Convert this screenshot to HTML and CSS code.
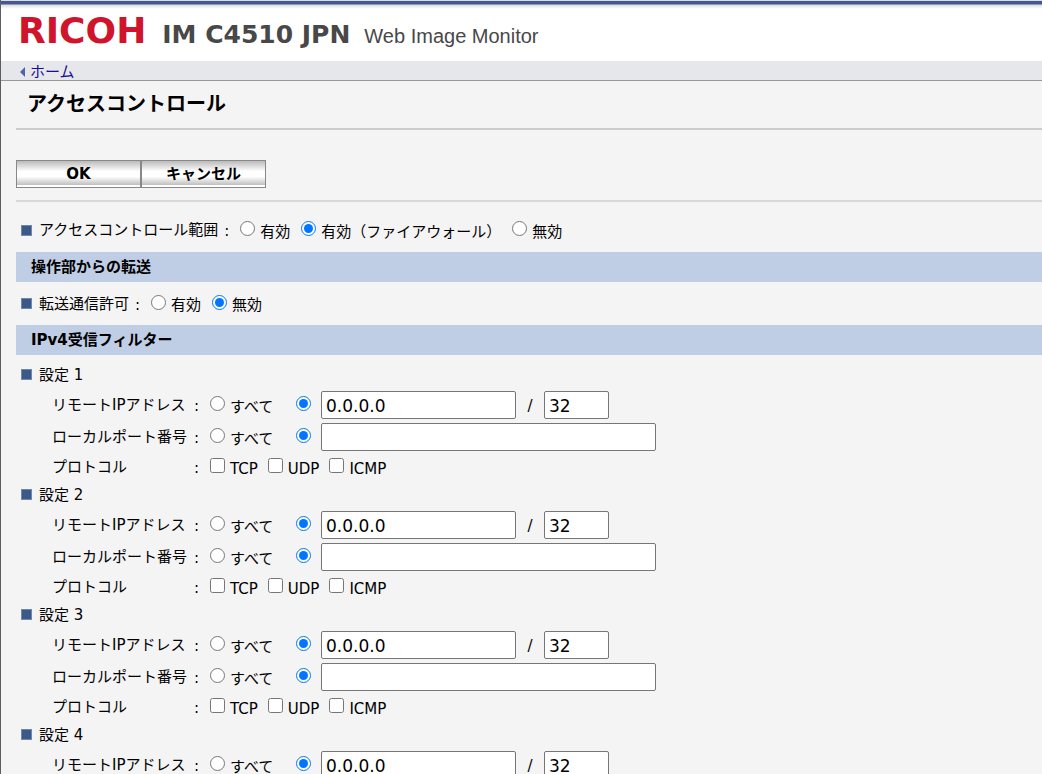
FILE: index.html
```
<!DOCTYPE html>
<html lang="ja">
<head>
<meta charset="utf-8">
<title>Web Image Monitor</title>
<link rel="stylesheet" href="styles.css">
</head>
<body>
<div class="page">
  <header class="header">
    <span class="logo">RICOH</span>
    <span class="model">IM C4510 JPN</span>
    <span class="product">Web Image Monitor</span>
  </header>
  <nav class="breadcrumb">
    <svg class="back-icon" width="5" height="10" viewBox="0 0 5 10" aria-hidden="true"><path d="M5 0v10L0 5z" fill="#5560a8"/></svg>
    <a href="#">ホーム</a>
  </nav>
  <main class="content">
    <h1 class="title">アクセスコントロール</h1>
    <form>
      <div class="actions">
        <button type="button" class="button">OK</button>
        <button type="button" class="button">キャンセル</button>
      </div>

      <div class="row range-row" role="radiogroup" aria-labelledby="range">
        <span class="marker"></span><span id="range">アクセスコントロール範囲</span><span class="colon">:</span>
        <div class="options">
          <label class="option"><input type="radio" name="range"><span>有効</span></label>
          <label class="option"><input type="radio" name="range" checked><span>有効（ファイアウォール）</span></label>
          <label class="option"><input type="radio" name="range"><span>無効</span></label>
        </div>
      </div>

      <h2 class="band">操作部からの転送</h2>
      <div class="row forward-row" role="radiogroup" aria-labelledby="forward">
        <span class="marker"></span><span id="forward">転送通信許可</span><span class="colon">:</span>
        <div class="options">
          <label class="option"><input type="radio" name="forward"><span>有効</span></label>
          <label class="option"><input type="radio" name="forward" checked><span>無効</span></label>
        </div>
      </div>

      <h2 class="band">IPv4受信フィルター</h2>
      <div class="filters">
        <section class="filter">
          <h3 class="filter-name"><span class="marker"></span>設定 1</h3>
          <div class="field"><label class="name" for="ip1">リモートIPアドレス</label><span class="colon">:</span><label class="option all"><input type="radio" name="remote1"><span>すべて</span></label><input type="radio" name="remote1" aria-label="IPアドレスを指定" checked><input class="text address" id="ip1" type="text" value="0.0.0.0"><span class="slash">/</span><input class="text prefix" type="text" value="32" aria-label="プレフィックス長"></div>
          <div class="field"><label class="name" for="port1">ローカルポート番号</label><span class="colon">:</span><label class="option all"><input type="radio" name="local1"><span>すべて</span></label><input type="radio" name="local1" aria-label="ポート番号を指定" checked><input class="text port" id="port1" type="text"></div>
          <div class="field protocol"><span class="name">プロトコル</span><span class="colon">:</span><div class="options"><label class="option"><input type="checkbox"><span>TCP</span></label><label class="option"><input type="checkbox"><span>UDP</span></label><label class="option"><input type="checkbox"><span>ICMP</span></label></div></div>
        </section>
        <section class="filter">
          <h3 class="filter-name"><span class="marker"></span>設定 2</h3>
          <div class="field"><label class="name" for="ip2">リモートIPアドレス</label><span class="colon">:</span><label class="option all"><input type="radio" name="remote2"><span>すべて</span></label><input type="radio" name="remote2" aria-label="IPアドレスを指定" checked><input class="text address" id="ip2" type="text" value="0.0.0.0"><span class="slash">/</span><input class="text prefix" type="text" value="32" aria-label="プレフィックス長"></div>
          <div class="field"><label class="name" for="port2">ローカルポート番号</label><span class="colon">:</span><label class="option all"><input type="radio" name="local2"><span>すべて</span></label><input type="radio" name="local2" aria-label="ポート番号を指定" checked><input class="text port" id="port2" type="text"></div>
          <div class="field protocol"><span class="name">プロトコル</span><span class="colon">:</span><div class="options"><label class="option"><input type="checkbox"><span>TCP</span></label><label class="option"><input type="checkbox"><span>UDP</span></label><label class="option"><input type="checkbox"><span>ICMP</span></label></div></div>
        </section>
        <section class="filter">
          <h3 class="filter-name"><span class="marker"></span>設定 3</h3>
          <div class="field"><label class="name" for="ip3">リモートIPアドレス</label><span class="colon">:</span><label class="option all"><input type="radio" name="remote3"><span>すべて</span></label><input type="radio" name="remote3" aria-label="IPアドレスを指定" checked><input class="text address" id="ip3" type="text" value="0.0.0.0"><span class="slash">/</span><input class="text prefix" type="text" value="32" aria-label="プレフィックス長"></div>
          <div class="field"><label class="name" for="port3">ローカルポート番号</label><span class="colon">:</span><label class="option all"><input type="radio" name="local3"><span>すべて</span></label><input type="radio" name="local3" aria-label="ポート番号を指定" checked><input class="text port" id="port3" type="text"></div>
          <div class="field protocol"><span class="name">プロトコル</span><span class="colon">:</span><div class="options"><label class="option"><input type="checkbox"><span>TCP</span></label><label class="option"><input type="checkbox"><span>UDP</span></label><label class="option"><input type="checkbox"><span>ICMP</span></label></div></div>
        </section>
        <section class="filter">
          <h3 class="filter-name"><span class="marker"></span>設定 4</h3>
          <div class="field"><label class="name" for="ip4">リモートIPアドレス</label><span class="colon">:</span><label class="option all"><input type="radio" name="remote4"><span>すべて</span></label><input type="radio" name="remote4" aria-label="IPアドレスを指定" checked><input class="text address" id="ip4" type="text" value="0.0.0.0"><span class="slash">/</span><input class="text prefix" type="text" value="32" aria-label="プレフィックス長"></div>
        </section>
      </div>
    </form>
  </main>
</div>
</body>
</html>
```
FILE: styles.css
```
* { box-sizing: border-box; }

body {
  margin: 0;
  color: #000;
  font: 400 15px/20px "DejaVu Sans", "Noto Sans CJK JP", sans-serif;
}

.page {
  height: 100vh;
  overflow: hidden;
  border-left: 1px solid #5c5c66;
  background: #f4f4f4;
}

.header {
  display: flex;
  align-items: baseline;
  height: 61px;
  padding: 11px 0 0 17px;
  background: linear-gradient(#d8dce2 1px, #46568f 1px, #46568f 4px, #9096b4 4px, #9096b4 5px, #dedede 5px, #fff 9px);
  white-space: nowrap;
}

.logo {
  color: #cf142b;
  font-size: 36px;
  font-weight: bold;
  line-height: 40px;
}

.model {
  margin-left: 16px;
  color: #484848;
  font-size: 25px;
  font-weight: bold;
}

.product {
  margin-left: 14px;
  color: #484848;
  font-family: "Liberation Sans", sans-serif;
  font-size: 20px;
}

.breadcrumb {
  display: flex;
  align-items: center;
  gap: 5px;
  height: 20px;
  padding: 2px 0 0 19px;
  border-bottom: 1px solid #999;
  background: #e6e7eb;
}

.breadcrumb a {
  color: #1a0d91;
  text-decoration: none;
}

.content { padding-left: 15px; }

.title {
  height: 49px;
  margin: 0;
  padding: 8px 0 0 11px;
  border-bottom: 2px solid #ccc;
  font-size: 20px;
  font-weight: bold;
  line-height: 30px;
}

.actions {
  display: flex;
  padding: 30px 0 12px;
  border-bottom: 2px solid #d8d8d8;
}

.button {
  width: 125px;
  height: 28px;
  padding: 0;
  border: 1px solid #888;
  background: linear-gradient(#bbb, #fff 40%, #fff 60%, #bbb 94%, #fff 94%);
  color: #000;
  font: bold 15px/20px "DejaVu Sans", "Noto Sans CJK JP", sans-serif;
}

.row {
  display: flex;
  align-items: center;
  padding-left: 5px;
  white-space: nowrap;
}

.range-row { height: 50px; padding-top: 6px; }
.forward-row { height: 43px; }

.marker {
  flex: none;
  width: 11px;
  height: 11px;
  margin-right: 7px;
  border: 1px solid #7088ae;
  background: #3a5888;
}

.colon {
  width: 22px;
  padding: 2px 0 0 6px;
}

.options { display: flex; gap: 11px; }

.option {
  display: flex;
  align-items: center;
  gap: 5px;
}

.option span { padding-top: 3px; }

input[type="radio"],
input[type="checkbox"] {
  flex: none;
  width: 15px;
  height: 15px;
  margin: 0 0 3px;
}

.band {
  height: 30px;
  margin: 0;
  padding-left: 15px;
  background: #bfcee5;
  font-size: 15px;
  font-weight: bold;
  line-height: 30px;
}

.filters { padding-top: 5px; }

.filter-name {
  display: flex;
  align-items: center;
  height: 29px;
  margin: 0;
  padding-left: 5px;
  font-size: 15px;
  font-weight: 400;
}

.field {
  display: flex;
  align-items: center;
  height: 32px;
  padding-left: 36px;
  white-space: nowrap;
}

.name {
  width: 136px;
}

.all { width: 86px; }

.text {
  height: 28px;
  padding: 2px 4px 0;
  border: 1px solid #767676;
  border-radius: 2px;
  background: #fff;
  color: #000;
  font: 17px "DejaVu Sans", sans-serif;
}

.address { width: 195px; margin-left: 10px; }
.prefix { width: 65px; }
.port { width: 335px; margin-left: 10px; }

.slash {
  width: 28px;
  padding-top: 2px;
  text-align: center;
}

.protocol { height: 27px; }
.protocol .options { gap: 10px; }
.protocol .option span { padding-top: 5px; }
```
